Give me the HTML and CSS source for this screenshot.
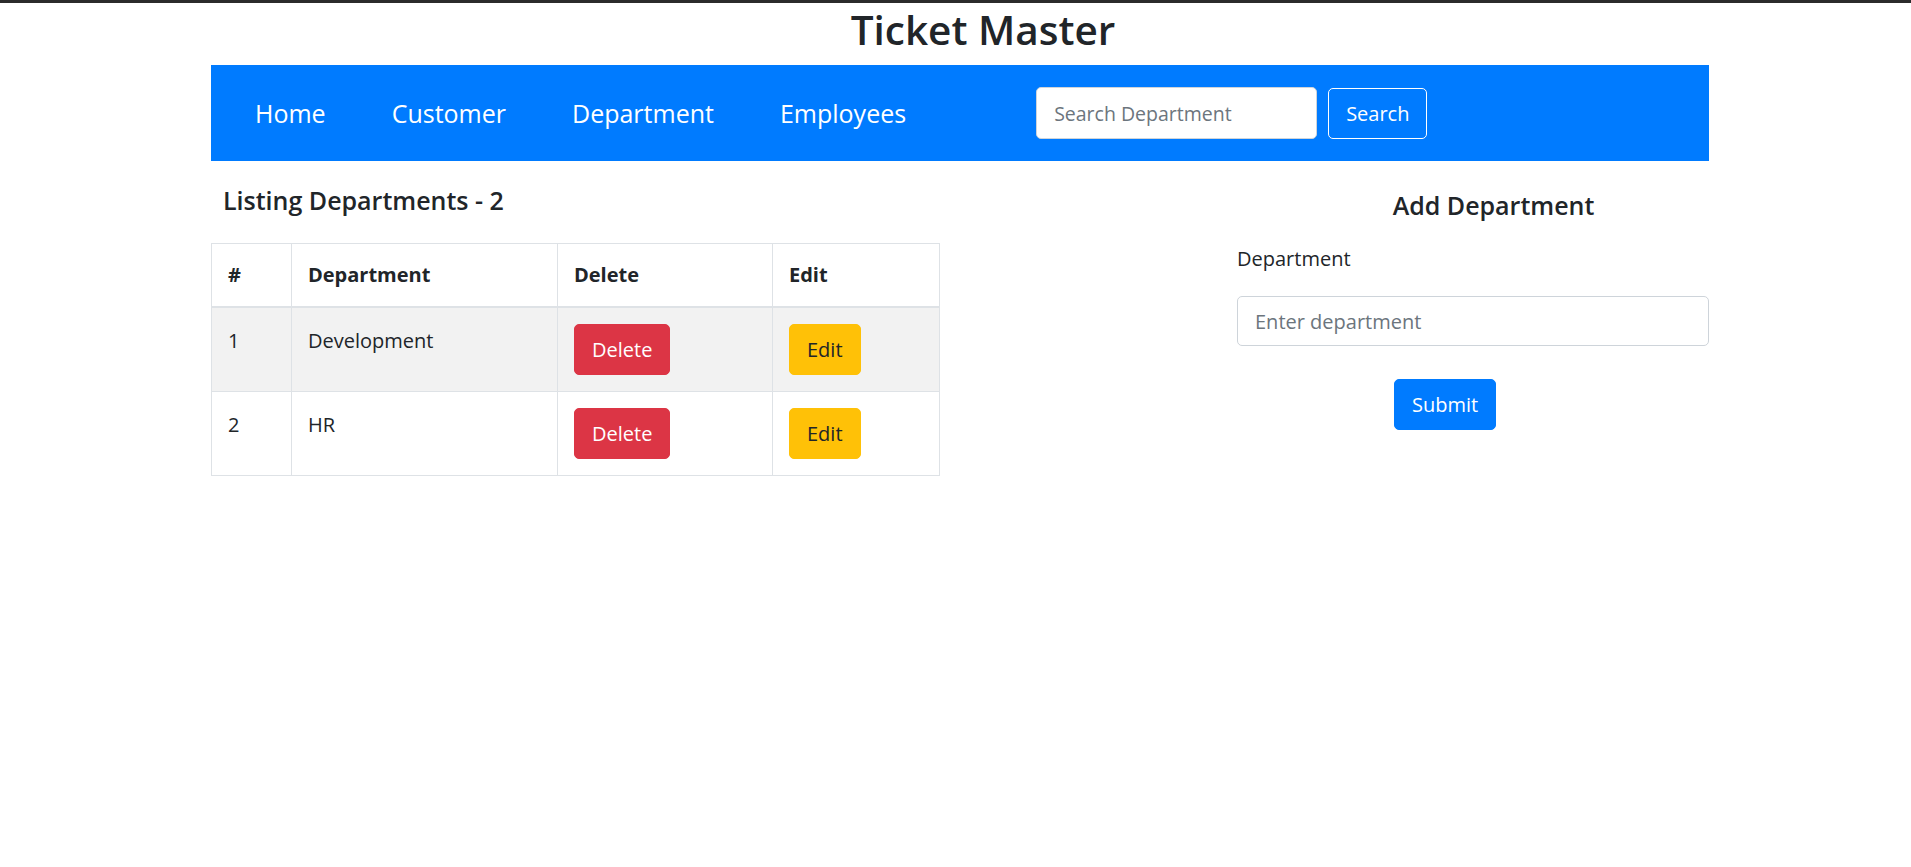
FILE: index.html
```html
<!DOCTYPE html>
<html lang="en">
<head>
<meta charset="utf-8">
<title>Ticket Master</title>
<link rel="stylesheet" href="styles.css">
</head>
<body>
<div class="topbar"></div>
<div class="page">
  <h1 class="title">Ticket Master</h1>
  <nav class="navbar">
    <a class="nav-link" href="#">Home</a>
    <a class="nav-link" href="#">Customer</a>
    <a class="nav-link" href="#">Department</a>
    <a class="nav-link" href="#">Employees</a>
    <form class="search-form">
      <input class="search-input" type="text" placeholder="Search Department">
      <button class="btn btn-outline" type="button">Search</button>
    </form>
  </nav>
  <div class="content">
    <section class="listing">
      <h5 class="listing-title">Listing Departments - 2</h5>
      <table class="table">
        <colgroup>
          <col class="c1"><col class="c2"><col class="c3"><col class="c4">
        </colgroup>
        <thead>
          <tr><th>#</th><th>Department</th><th>Delete</th><th>Edit</th></tr>
        </thead>
        <tbody>
          <tr class="striped">
            <td class="txt">1</td><td class="txt">Development</td>
            <td><button class="btn btn-danger" type="button">Delete</button></td>
            <td><button class="btn btn-warning" type="button">Edit</button></td>
          </tr>
          <tr>
            <td class="txt">2</td><td class="txt">HR</td>
            <td><button class="btn btn-danger" type="button">Delete</button></td>
            <td><button class="btn btn-warning" type="button">Edit</button></td>
          </tr>
        </tbody>
      </table>
    </section>
    <section class="add">
      <h5 class="add-title">Add Department</h5>
      <label class="add-label">Department</label>
      <input class="add-input" type="text" placeholder="Enter department">
      <div class="submit-row">
        <button class="btn btn-primary" type="button">Submit</button>
      </div>
    </section>
  </div>
</div>
</body>
</html>
```

FILE: styles.css
```css
html, body {
  margin: 0;
  padding: 0;
  background: #fff;
}
body {
  font-family: "Open Sans", "Noto Sans", sans-serif;
  font-size: 20px;
  line-height: 1.5;
  color: #212529;
}
.topbar {
  height: 3px;
  background: #2b2b2b;
}
.page {
  width: 1498px;
  margin-left: 211px;
}
.title {
  margin: 2px 0 10px;
  padding-left: 46px;
  font-size: 40.5px;
  line-height: 50px;
  font-weight: 600;
  text-align: center;
}
.navbar {
  display: flex;
  align-items: center;
  height: 96px;
  box-sizing: border-box;
  padding: 0 11px;
  background: #007bff;
}
.nav-link {
  padding: 0 33px;
  font-size: 25px;
  line-height: 37px;
  color: #fff;
  text-decoration: none;
}
.search-form {
  display: flex;
  align-items: center;
  gap: 11px;
  margin-left: 97px;
}
.search-input {
  box-sizing: border-box;
  width: 281px;
  height: 52px;
  padding: 0 17px;
  border: 1px solid #ced4da;
  border-radius: 5px;
  font-family: inherit;
  font-size: 19.5px;
  color: #495057;
  background: #fff;
  outline: none;
}
.search-input::placeholder,
.add-input::placeholder {
  color: #6c757d;
}
.btn {
  box-sizing: border-box;
  padding: 9px 17px;
  border: 1px solid transparent;
  border-radius: 5px;
  font-family: inherit;
  font-size: 20px;
  line-height: 31px;
  cursor: pointer;
}
.btn-outline {
  background: transparent;
  border-color: #fff;
  color: #fff;
}
.btn-danger {
  background: #dc3545;
  border-color: #dc3545;
  color: #fff;
}
.btn-warning {
  background: #ffc107;
  border-color: #ffc107;
  color: #212529;
}
.btn-primary {
  background: #007bff;
  border-color: #007bff;
  color: #fff;
}
.content {
  display: flex;
  align-items: flex-start;
}
.listing {
  width: 728px;
}
.listing-title {
  margin: 24px 0 28px;
  padding-left: 12px;
  font-size: 25px;
  line-height: 30px;
  font-weight: 600;
}
.table {
  width: 728px;
  table-layout: fixed;
  border-collapse: collapse;
  border: 1px solid #dee2e6;
}
.c1 { width: 80px; }
.c2 { width: 266px; }
.c3 { width: 215px; }
.c4 { width: 167px; }
.table th,
.table td {
  padding: 16px 16px;
  border: 1px solid #dee2e6;
  text-align: left;
  vertical-align: top;
  line-height: 30px;
}
.table td.txt {
  padding-top: 18px;
  padding-bottom: 14px;
}
.table th {
  font-weight: 700;
  border-bottom-width: 2px;
}
.table tr.striped td {
  background: #f2f2f2;
}
.add {
  width: 472px;
  margin-left: auto;
}
.add-title {
  margin: 29px 0 24px;
  padding-left: 41px;
  font-size: 25px;
  line-height: 30px;
  font-weight: 600;
  text-align: center;
}
.add-label {
  display: block;
  line-height: 30px;
}
.add-input {
  display: block;
  box-sizing: border-box;
  width: 472px;
  height: 50px;
  margin-top: 22px;
  padding: 0 17px;
  border: 1px solid #ced4da;
  border-radius: 5px;
  font-family: inherit;
  font-size: 20px;
  color: #495057;
  background: #fff;
  outline: none;
}
.submit-row {
  margin-top: 33px;
  padding-left: 157px;
}
```
